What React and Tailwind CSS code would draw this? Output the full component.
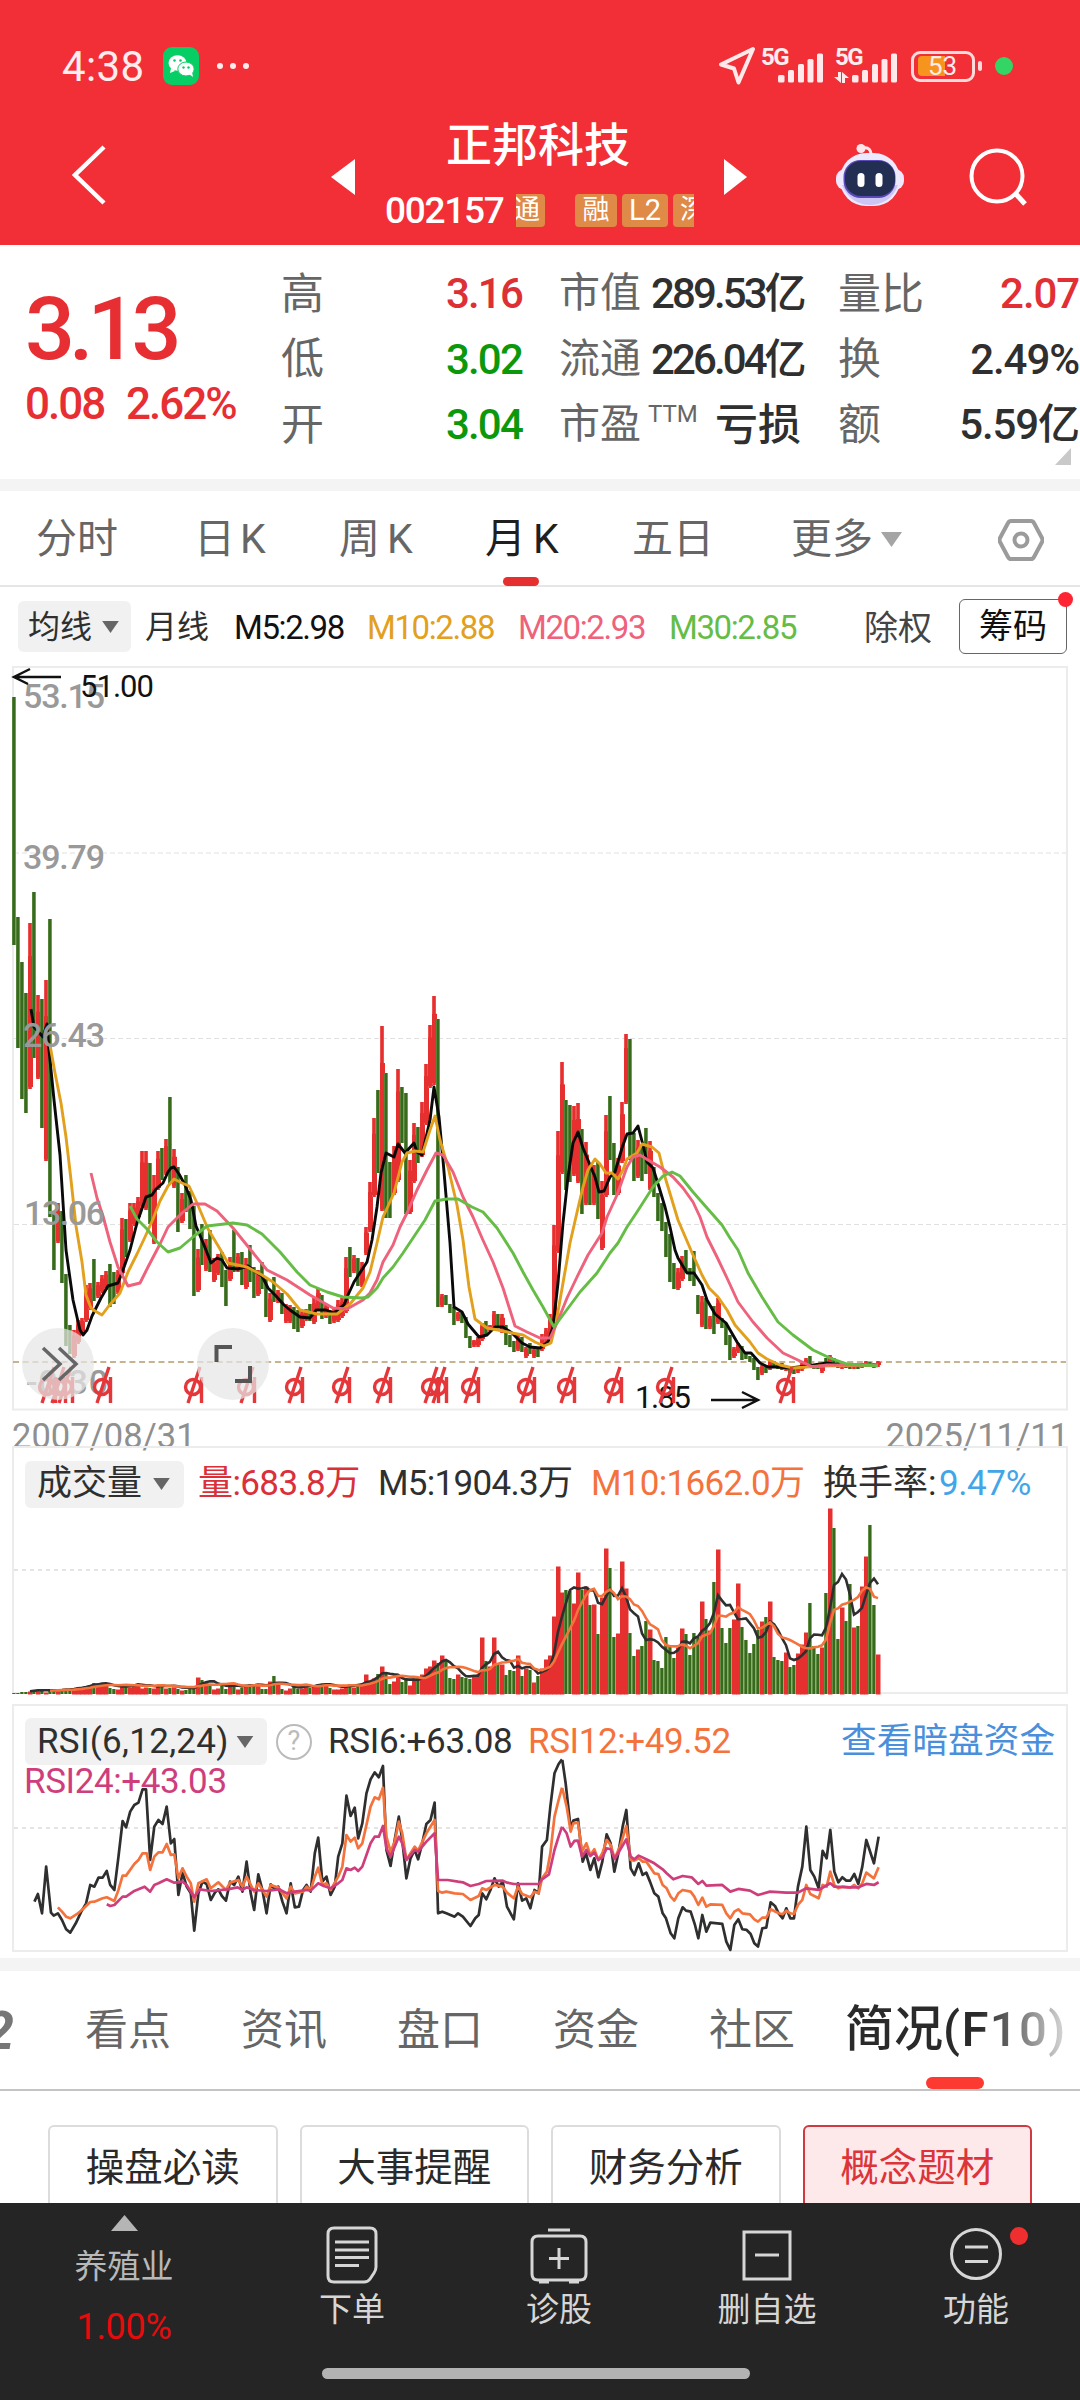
// [trend, high, low] per month, r = up, g = down
const CANDLES =
  "g37-285 g257-388 g302-439 g333-453 r263-429 g232-398 r335-419 g339-468 r320-501 g259-557 g551-610 r543-583 g551-623 g614-686 g665-694 r670-698 r660-684 r658-673 r625-662 r623-650 " +
  "g599-641 r622-638 r615-633 r611-630 g604-647 g612-644 r610-634 r558-615 g559-597 r543-582 r543-566 r537-559 r491-548 r491-550 g503-564 r515-584 r491-530 g488-520 r479-515 g437-524 " +
  "r489-528 g507-572 r533-563 g515-552 g531-569 g546-636 r589-632 g564-605 r579-611 g570-612 r598-622 r594-615 g592-627 g610-646 r597-621 g570-612 r593-612 g592-625 r598-629 g585-622 " +
  "g607-638 r610-636 g602-629 g619-657 r633-662 g617-642 r630-643 g633-654 r644-663 r645-663 g647-669 g650-672 r650-668 r649-661 g644-661 r638-664 r629-650 g635-659 r644-658 g650-664 " +
  "r648-663 r640-662 r638-658 r597-653 g587-617 r595-613 g598-626 r602-627 r567-595 r522-572 r458-537 g430-513 r366-551 g413-558 g502-558 r486-535 r409-522 g427-483 g433-554 r500-554 " +
  "r463-523 g467-503 r442-497 r404-465 r365-428 r336-425 g359-647 r634-647 g635-645 g644-653 g647-665 r652-661 g653-663 g657-678 g676-688 r680-687 r677-687 r663-681 g661-674 r665-671 " +
  "r651-668 g654-668 r654-673 g665-685 g675-687 g681-692 r675-691 g677-692 r687-698 g683-694 r688-698 g687-697 r674-691 r668-682 r654-677 r565-667 r471-593 r402-514 g440-530 g445-522 " +
  "r446-516 r443-523 g469-554 r482-545 g507-545 r505-545 g502-559 r521-590 r455-537 g436-500 g483-535 r498-535 r442-503 r374-444 g379-500 g473-521 r480-518 g487-521 g468-514 r481-530 " +
  "g507-537 g533-561 g543-571 g562-597 g574-622 g603-629 r608-630 r596-621 g590-613 g608-621 g591-626 g635-654 r636-667 g638-669 r656-669 g646-674 r638-664 g658-668 g663-685 g675-700 " +
  "r687-698 r683-693 g686-700 g692-699 g696-702 g698-710 g707-720 r705-715 g705-713 r700-710 g701-708 g704-709 g703-710 r706-711 g707-713 g707-714 r707-713 r703-711 r698-708 g696-707 " +
  "g704-709 g703-709 r704-713 g698-707 r695-706 g698-707 g701-708 r704-709 g703-708 g704-709 r704-709 g704-709 r703-708 r701-707 g702-707 g703-708 r701-707";

const candles = CANDLES.split(" ").map((c) => {
  const [hi, lo] = c.slice(1).split("-").map(Number);
  return { up: c[0] === "r", hi, lo };
});

const MA5 =
  "31,349 34,367 43,377 47,364 49,390 54,440 60,495 66,590 73,640 80,670 83,675 87,670 92,656 101,638 108,626 118,623 123,610 130,590 137,563 146,537 152,535 156,529 163,523 168,512 171,508 174,507 179,514 185,525 191,540 196,566 204,585 211,603 217,598 222,600 227,608 238,609 248,606 256,612 262,616 268,628 276,636 284,645 290,650 300,657 310,658 316,650 326,650 334,653 344,645 348,635 354,622 367,602 372,580 377,547 381,513 386,493 394,497 398,484 405,493 414,483 417,492 422,495 430,460 434,427 439,457 443,500 450,583 454,647 462,652 468,664 479,677 487,675 495,667 503,667 512,673 522,683 530,687 540,688 548,682 553,667 558,623 563,563 568,517 573,483 578,472 583,488 590,505 595,517 599,532 604,531 610,517 615,512 622,488 627,474 633,473 638,466 643,485 647,502 653,508 659,527 665,547 670,567 675,590 678,598 687,613 694,613 702,625 707,640 715,654 726,663 737,682 745,693 751,693 760,703 768,707 778,707 790,708 807,706 827,703 840,705 878,705";
const MA10 =
  "50,385 55,413 61,443 66,477 71,520 76,566 82,602 86,635 91,648 95,651 102,655 108,647 120,633 128,612 137,594 145,577 153,559 160,541 168,526 174,519 182,523 189,526 197,543 208,569 220,589 228,603 247,607 262,615 273,622 287,634 300,650 317,654 337,654 350,644 363,628 370,612 377,583 383,557 394,533 402,502 407,493 415,491 423,492 430,470 435,456 440,480 448,507 457,545 463,580 469,627 475,659 487,668 498,670 512,673 523,675 535,682 544,686 551,683 556,663 563,623 570,583 578,548 583,527 588,510 595,499 600,504 606,513 612,513 618,519 623,510 627,499 637,493 642,484 652,487 659,493 665,517 678,560 693,595 702,615 709,628 718,637 727,650 735,665 750,682 758,693 767,699 780,705 793,708 820,706 878,705";
const MA20 =
  "91,513 97,538 103,556 110,582 118,607 128,626 140,623 148,607 160,584 168,567 182,553 193,544 205,544 217,551 233,568 250,589 267,610 287,620 310,635 333,648 347,649 363,640 370,633 377,620 383,602 393,585 400,567 407,553 417,530 427,510 436,493 443,495 453,512 463,537 473,557 482,578 493,602 503,628 515,666 527,672 540,678 550,678 557,663 567,638 577,617 588,595 602,573 607,557 617,535 627,507 633,497 640,495 648,500 660,507 673,517 683,528 693,542 700,557 707,577 717,597 727,618 738,642 753,662 767,678 783,693 800,701 813,707 827,705 878,705";
const MA30 =
  "130,546 137,559 147,569 157,582 168,592 180,588 193,577 207,566 233,563 247,565 262,574 280,592 297,612 310,625 327,632 343,637 362,638 368,637 377,628 383,618 393,607 403,593 415,575 425,560 435,541 447,539 458,539 472,547 483,552 497,568 513,593 523,612 533,630 543,647 554,667 563,655 580,632 597,613 610,593 618,583 627,567 637,552 653,527 663,516 672,512 680,516 693,532 707,548 722,565 730,578 738,590 748,613 762,637 778,662 793,675 813,690 830,698 847,704 878,706";

const VOLUMES = [
  1, 1, 2, 2, 3, 3, 3, 3, 2, 3, 3, 3, 4, 4, 4, 5, 7, 6, 8, 9, 11, 9, 10, 9, 6,
  5, 5, 8, 9, 7, 9, 10, 6, 7, 6, 6, 8, 9, 6, 6, 7, 5, 4, 4, 5, 6, 17, 14, 12,
  10, 5, 6, 10, 5, 9, 8, 5, 6, 8, 10, 9, 9, 5, 5, 13, 18, 10, 5, 4, 6, 8, 5, 6,
  9, 6, 8, 10, 9, 10, 6, 5, 5, 6, 9, 10, 7, 8, 9, 20, 14, 16, 20, 28, 22, 10,
  13, 18, 12, 15, 9, 14, 16, 20, 26, 28, 34, 31, 39, 33, 16, 15, 20, 17, 16, 15,
  18, 20, 57, 33, 28, 57, 31, 30, 19, 24, 23, 39, 18, 26, 24, 12, 18, 26, 35,
  39, 78, 128, 102, 104, 103, 91, 122, 104, 108, 89, 90, 60, 97, 146, 126, 57,
  61, 133, 106, 61, 38, 45, 48, 73, 65, 34, 33, 26, 57, 49, 36, 47, 66, 60, 39,
  61, 57, 93, 75, 64, 112, 145, 66, 51, 66, 75, 111, 67, 54, 41, 50, 64, 73, 77,
  93, 37, 34, 33, 42, 27, 29, 41, 50, 62, 91, 48, 40, 47, 101, 186, 166, 55, 87,
  73, 110, 67, 68, 108, 138, 169, 89, 40,
];

const average = (n) =>
  VOLUMES.map((_, i) => {
    if (i < n - 1) return null;
    const sum = VOLUMES.slice(i - n + 1, i + 1).reduce((a, b) => a + b, 0);
    return `${14 + i * 4},${247 - sum / n}`;
  })
    .filter(Boolean)
    .join(" ");

const RSI = [
  {
    color: "#2f2f2f",
    early:
      "50,635 55,612 61,670 67,530 74,668 78,677 84,670 90,690 96,718 102,728 110,700 118,665 125,640 131,585 137,590 143,563 149,563 155,543 160,585 166,600 172,500 178,393 183,412 189,365 195,345 201,338 207,298 212,298 218,510 224,410 230,390 236,402 242,350 248,460 253,447 259,615 265,548 271,590 277,610 282,722 288,610 294,575 300,582 306,630 312,608 317,598 322,618 328,632 334,575 340,585 346,560 352,605 358,515 364,610 369,660 375,553 381,600 387,670 393,583 399,598 404,590 410,635 416,670 422,580 428,652 434,650 440,600 445,585 451,605 457,490 462,443 468,575 474,560 480,615 486,590 491,500 497,460 503,317 509,378 515,353 520,445 526,400 532,310 538,268 544,247 550,262 556,228 561,480 567,528 573,450 579,380 584,450 590,565 596,505 602,480 607,508 613,460 619,402 625,390 631,338 636,670 642,665 648,670 660,680 665,670 672,680 683,708 690,685 695,675 700,610 706,628 712,600 718,565 724,590 730,575 736,650 746,688 752,580 758,632 764,625 770,655 776,600 782,610 787,470 794,450 799,350 805,250 811,222 816,208",
    late: "127,780 137,850 152,985 160,962 174,957 188,1085 198,1060 211,1110 223,1075 235,1132 247,1085 260,1003 272,1030 283,1115 295,1060 308,980 319,930 332,1105 343,1125 356,1090 368,1125 379,1118 390,1145 403,1180 415,1190 428,1240 438,1255 452,1300 463,1315 475,1255 488,1222 498,1232 512,1235 525,1275 535,1315 547,1245 559,1295 571,1268 607,1272 619,1325 631,1350 643,1275 655,1258 667,1288 680,1290 692,1302 703,1330 714,1340 727,1285 739,1283 752,1207 765,1218 776,1240 788,1255 799,1225 811,1255 822,1255 834,1160 847,1100 859,980 871,1110 883,1130 896,1165 908,1053 920,1075 931,990 943,1115 955,1147 967,1132 979,1142 991,1142 1003,1122 1015,1152 1027,1100 1039,1020 1062,1090 1076,1010",
  },
  {
    color: "#f4733d",
    early:
      "84,652 90,665 96,680 102,685 112,672 120,658 131,636 137,635 149,625 155,622 166,633 172,600 178,557 183,557 195,522 201,510 207,490 213,490 218,540 224,500 230,487 236,487 242,462 248,495 253,493 259,565 265,535 271,560 277,580 282,635 288,580 300,568 306,595 317,577 328,600 334,578 346,570 352,590 358,560 369,605 375,580 387,620 393,585 404,593 416,625 422,590 428,610 440,605 445,590 451,600 457,560 462,533 468,585 474,580 480,600 491,560 497,530 503,435 509,455 515,443 520,475 526,460 538,350 544,322 550,328 556,293 561,440 567,485 573,455 579,395 584,430 590,510 596,490 602,470 607,482 619,430 631,390 636,603 642,608 648,605 660,610 672,612 683,630 695,618 700,595 706,600 718,585 730,590 736,608 746,625 752,590 758,612 770,622 776,605 782,610 787,565 794,545 799,490 805,380 811,330 816,293",
    late: "127,865 140,920 152,995 160,970 174,968 186,1055 199,1030 211,1065 223,1048 235,1080 247,1060 260,1020 272,1035 284,1075 300,1040 319,978 332,1080 343,1082 356,1075 368,1085 379,1085 403,1120 415,1122 428,1155 440,1165 452,1190 463,1202 475,1180 488,1170 512,1175 523,1190 535,1215 547,1193 559,1220 571,1213 607,1215 619,1240 631,1255 643,1235 655,1228 667,1240 690,1243 703,1258 714,1265 727,1253 739,1253 752,1228 776,1240 788,1243 799,1232 811,1240 822,1242 834,1215 847,1200 859,1155 871,1182 896,1195 908,1155 920,1160 931,1115 943,1155 955,1165 967,1160 991,1163 1003,1155 1015,1165 1027,1150 1039,1118 1062,1135 1076,1102",
  },
  {
    color: "#cf3e7c",
    early:
      "155,643 160,648 166,645 178,620 183,620 195,603 201,598 210,590 218,605 224,585 230,580 242,568 253,578 265,575 271,585 282,622 290,598 306,603 330,598 345,592 352,600 358,592 369,600 387,603 405,598 416,610 428,605 445,600 451,602 462,580 470,588 480,595 491,580 497,570 503,535 509,540 515,533 520,543 526,530 532,495 538,460 544,440 550,440 556,408 561,475 567,500 579,440 584,460 590,510 602,480 607,485 619,455 631,430 636,570 650,570 665,575 672,577 683,588 695,582 706,573 730,572 736,578 746,582 782,582 787,568 797,553 805,480 811,440 816,410",
    late: "127,982 140,1000 152,1040 163,1023 174,1022 186,1070 199,1050 211,1068 223,1058 235,1080 247,1072 260,1045 272,1048 284,1077 300,1050 319,1018 332,1070 343,1078 356,1067 379,1078 403,1090 428,1108 440,1120 460,1138 488,1128 515,1132 535,1152 547,1143 559,1157 607,1155 631,1175 655,1167 690,1172 714,1185 750,1175 799,1178 834,1178 859,1165 896,1170 931,1150 943,1160 991,1162 1015,1162 1039,1152 1062,1155 1076,1147",
  },
];

const DIVIDENDS = [47, 57, 64, 102, 193, 246, 294, 341, 382, 430, 438, 470, 526, 566, 613, 665, 785];

const Caret = ({ className }) => (
  <svg viewBox="0 0 18 13" className={className}>
    <path d="M0 0h18L9 13z" fill="currentColor" />
  </svg>
);

const Signal = () => (
  <svg className="shrink-0" width="46" height="30" viewBox="0 0 46 30" fill="#ffe9ea">
    <rect x="0" y="22" width="6.5" height="7.5" rx="1.5" />
    <rect x="10" y="17" width="6" height="12.5" rx="1.5" />
    <rect x="20" y="11" width="6" height="18.5" rx="1.5" />
    <rect x="29.5" y="6" width="6" height="23.5" rx="1.5" />
    <rect x="39" y="0.5" width="6" height="29" rx="1.5" />
  </svg>
);

const StatusBar = () => (
  <div className="flex h-[102px] items-end">
    <div className="flex h-[72px] w-full items-center text-[#ffeced]">
      <span className="ml-[62px] w-[101px] text-[42px] tracking-[0.4px]">4:38</span>
      <svg width="36" height="38" viewBox="0 0 36 38">
        <rect width="36" height="38" rx="9" fill="#06ce64" />
        <ellipse cx="14.500" cy="16" rx="9" ry="7.800" fill="#fff" />
        <path d="M8 21l-1 5 5-2z" fill="#fff" />
        <circle cx="11.500" cy="13.500" r="1.300" fill="#06ce64" />
        <circle cx="17.500" cy="13.500" r="1.300" fill="#06ce64" />
        <ellipse cx="23" cy="22" rx="8.200" ry="7" fill="#fff" stroke="#06ce64" />
        <path d="M26 27l4 3-1-5z" fill="#fff" />
        <circle cx="20.500" cy="20.500" r="1.200" fill="#06ce64" />
        <circle cx="25.500" cy="20.500" r="1.200" fill="#06ce64" />
      </svg>
      <div className="ml-[18px] flex gap-[7px]">
        <i className="size-[6px] rounded-full bg-[#ffeced]" />
        <i className="size-[6px] rounded-full bg-[#ffeced]" />
        <i className="size-[6px] rounded-full bg-[#ffeced]" />
      </div>
      <svg className="ml-[468px] shrink-0" width="40" height="40" viewBox="0 0 40 40" fill="none">
        <path
          d="M36 3L4 18.500l13 4 4.500 14z"
          stroke="#ffe9ea"
          strokeWidth="4"
          strokeLinejoin="round"
        />
      </svg>
      <div className="flex h-[38px] w-[66px] shrink-0 items-end pb-[2px]">
        <span className="mb-[14px] ml-[4px] w-[17px] shrink-0 text-[24px] leading-none font-bold tracking-[-1.5px]">
          5G
        </span>
        <Signal />
      </div>
      <div className="ml-[11px] flex h-[38px] w-[64px] shrink-0 items-end pb-[2px]">
        <span className="mb-[14px] ml-[1px] w-[17px] shrink-0 text-[24px] leading-none font-bold tracking-[-1.5px]">
          5G
        </span>
        <svg className="mr-[3px] -ml-[18px] shrink-0" width="15" height="11" viewBox="0 0 15 11">
          <path d="M0 5h4V0h3v11zM8 0v11h3V6h4z" fill="#ffe9ea" />
        </svg>
        <Signal />
      </div>
      <div className="ml-[13px] flex h-[31px] w-[64px] shrink-0 items-center rounded-[9px] border-3 border-[#ffdadb] px-[4px]">
        <div className="h-[20px] w-[27px] shrink-0 rounded-l-[4px] bg-[#f7941e]" />
        <span className="-ml-[17px] text-[26px] leading-none">53</span>
      </div>
      <i className="ml-[3px] h-[10px] w-[4px] rounded bg-[#ffdadb]" />
      <i className="ml-[13px] size-[18px] shrink-0 rounded-full bg-[#33d565]" />
    </div>
  </div>
);

const Robot = () => (
  <svg width="68" height="64" viewBox="0 0 68 64">
    <circle cx="25" cy="5.500" r="4.500" fill="#ffe6ea" />
    <path d="M26 5c6-1 9 1 9 7" stroke="#ffe6ea" strokeWidth="3" fill="none" />
    <rect x="0" y="26" width="68" height="21" rx="9" fill="#f1e6fb" />
    <rect x="4" y="10" width="60" height="53" rx="26" fill="#eeeafe" />
    <path d="M6 42c6 14 16 20 28 20s23-6 28-20z" fill="#cdc6f4" />
    <rect x="7.500" y="17" width="52" height="38" rx="17" fill="#5a49b8" />
    <rect x="9" y="18" width="50" height="35" rx="16" fill="#222e52" />
    <rect x="21.500" y="30" width="7" height="14" rx="3.500" fill="#fff" />
    <rect x="39.500" y="30" width="7" height="14" rx="3.500" fill="#fff" />
  </svg>
);

const Header = () => (
  <header className="h-[245px] bg-[#f22f37] text-white">
    <StatusBar />
    <div className="flex h-[143px] items-start">
      <svg className="mt-[43px] ml-[71px]" width="36" height="60" viewBox="0 0 36 60">
        <path d="M33 2L4 30l29 28" fill="none" stroke="#fff" strokeWidth="4.500" />
      </svg>
      <svg className="mt-[57px] ml-[224px]" width="24" height="36" viewBox="0 0 24 36">
        <path d="M24 0v36L0 18z" fill="#fff" />
      </svg>
      <div className="ml-[30px] flex w-[310px] flex-col">
        <h1 className="mt-[16px] ml-[61px] h-[54px] text-[46px] leading-[54px] font-medium whitespace-nowrap">
          正邦科技
        </h1>
        <div className="mt-[22px] flex h-[33px] items-center text-[30px] leading-[33px]">
          <span className="w-[131px] text-[37px] font-medium tracking-[-1.3px]">002157</span>
          <span className="flex h-[33px] w-[29px] justify-end overflow-hidden rounded-r bg-[#e08a48] pr-[5px] text-[27px]">
            通
          </span>
          <span className="ml-[30px] h-[33px] w-[42px] rounded bg-[#e08a48] text-center text-[27px]">
            融
          </span>
          <span className="ml-[5px] h-[33px] w-[46px] rounded bg-[#e08a48] text-center text-[29px]">
            L2
          </span>
          <span className="ml-[5px] h-[33px] w-[21px] overflow-hidden rounded-l bg-[#e08a48] pl-[7px] text-[27px] whitespace-nowrap">
            深
          </span>
        </div>
      </div>
      <svg className="mt-[57px] ml-[29px]" width="24" height="36" viewBox="0 0 24 36">
        <path d="M0 0v36l23-18z" fill="#fff" />
      </svg>
      <div className="mt-[41px] ml-[88px]">
        <Robot />
      </div>
      <svg className="mt-[46px] ml-[65px]" width="60" height="60" viewBox="0 0 60 60" fill="none">
        <circle cx="28" cy="28" r="25.500" stroke="#fff" strokeWidth="4" />
        <path d="M46 45l10 11" stroke="#fff" strokeWidth="5" />
      </svg>
    </div>
  </header>
);

const quotes = [
  ["高", "3.16", "text-[#dd3035]", "市值", "289.53亿", "量比", "2.07", "text-[#e22f33]"],
  ["低", "3.02", "text-[#0b980b]", "流通", "226.04亿", "换", "2.49%", "text-[#2f2f2f]"],
  ["开", "3.04", "text-[#0b980b]", "市盈", "亏损", "额", "5.59亿", "text-[#2f2f2f]"],
];

const Quote = () => (
  <section className="relative flex h-[234px]">
    <div className="ml-[25px] w-[256px] text-[#e62e33]">
      <div className="mt-[44px] h-[80px] text-[88px] leading-[80px] font-medium tracking-[-6px]">
        3.13
      </div>
      <div className="mt-[12px] flex h-[46px] items-center text-[44px] font-medium tracking-[-2px]">
        <span className="w-[101px]">0.08</span>
        <span>2.62%</span>
      </div>
    </div>
    <div className="mt-[16px]">
      {quotes.map(([a, b, bc, c, d, e, f, fc]) => (
        <div key={a} className="flex h-[65.5px] items-center text-[43px] whitespace-nowrap">
          <span className="w-[80px] text-[#666]">{a}</span>
          <span className={`w-[162px] pr-[1px] text-right text-[42px] font-medium tracking-[-1.8px] ${bc}`}>
            {b}
          </span>
          <span className="ml-[36px] flex w-[92px] text-[41px] text-[#666]">
            {c}
            {c === "市盈" && <sup className="top-[2px] ml-[7px] text-[24px] leading-[36px]">TTM</sup>}
          </span>
          <span
            className={
              d === "亏损"
                ? "w-[150px] text-right font-medium text-[#2f2f2f]"
                : "w-[150px] text-right text-[42px] font-medium tracking-[-2.9px] text-[#2f2f2f]"
            }
          >
            {d}
          </span>
          <span className="ml-[37px] w-[90px] text-[#666]">{e}</span>
          <span className={`w-[151px] text-right text-[42px] font-medium tracking-[-1.1px] ${fc}`}>{f}</span>
        </div>
      ))}
    </div>
    <svg className="absolute right-[9px] bottom-[14px]" width="16" height="17" viewBox="0 0 16 17">
      <path d="M16 0v17H0z" fill="#c9c9c9" />
    </svg>
  </section>
);

const PeriodTabs = () => (
  <nav className="flex h-[96px] items-center border-b-2 border-[#e6e6e6] pt-[3px] text-[41px] whitespace-nowrap text-[#666]">
    <span className="ml-[36px] w-[158px]">分时</span>
    <span className="w-[145px]">
      日<span className="ml-[5px]">K</span>
    </span>
    <span className="w-[146px]">
      周<span className="ml-[7px]">K</span>
    </span>
    <span className="relative w-[147px] text-[#1f1f1f]">
      月<span className="ml-[7px]">K</span>
      <i className="absolute -bottom-[16px] left-[18px] h-[9px] w-[36px] rounded-full bg-[#e62f2f]" />
    </span>
    <span className="w-[159px]">五日</span>
    <span className="w-[90px]">更多</span>
    <Caret className="h-[17px] w-[21px] text-[#a5a5a5]" />
    <svg className="ml-[96px]" width="46" height="44" viewBox="0 0 46 44" fill="none">
      <path
        d="M13 3h20q2 0 3 2l8 15q1 2 0 4l-8 15q-1 2-3 2H13q-2 0-3-2L2 24q-1-2 0-4l8-15q1-2 3-2z"
        stroke="#9b9b9b"
        strokeWidth="4"
      />
      <circle cx="23" cy="22" r="6.500" stroke="#9b9b9b" strokeWidth="4" />
    </svg>
  </nav>
);

const Averages = () => (
  <div className="flex h-[73px] items-center pt-[6px] text-[32px] whitespace-nowrap">
    <span className="ml-[18px] flex h-[51px] w-[113px] items-center rounded-md bg-[#f1f1f1] pl-[10px] text-[#2f2f2f]">
      均线
      <Caret className="ml-[10px] h-[12px] w-[17px] text-[#666]" />
    </span>
    <span className="mt-[3px] ml-[14px] flex text-[#2f2f2f]">
      <span className="w-[89px]">月线</span>
      <span className="w-[133px] text-[33px] tracking-[-1.4px] text-[#111]">M5:2.98</span>
      <span className="w-[151px] text-[33px] tracking-[-1.4px] text-[#e2a01c]">M10:2.88</span>
      <span className="w-[151px] text-[33px] tracking-[-1.4px] text-[#ee627c]">M20:2.93</span>
      <span className="w-[195px] text-[33px] tracking-[-1.4px] text-[#65bd45]">M30:2.85</span>
    </span>
    <span className="mt-[3px] text-[34px] text-[#444]">除权</span>
    <span className="relative ml-[27px] flex h-[55px] w-[108px] items-center justify-center rounded-md border-[1.5px] border-[#666] text-[34px] text-[#111]">
      筹码
      <i className="absolute -top-[8px] -right-[7px] size-[15px] rounded-full bg-[#ff2433]" />
    </span>
  </div>
);

const PriceChart = () => (
  <section className="h-[751px]">
    <svg width="1080" height="751" viewBox="0 0 1080 751" fill="none">
      <rect x="13" y="7" width="1054" height="742.500" stroke="#ececec" strokeWidth="2" />
      <path d="M14 193H1066M14 378.500H1066M14 564.500H1066" stroke="#e0e0e0" strokeDasharray="5 3" />
      <path d="M13 702H1066" stroke="#b59b6a" strokeWidth="1.500" strokeDasharray="6 3.700" />
      {candles.map(({ up, hi, lo }, i) => {
        const x = 14 + i * 4;
        const body = hi + (lo - hi) * 0.2;
        return up ? (
          <g key={i}>
            <rect x={x - 2} y={hi} width="4" height={lo - hi} fill="#ee5353" />
            <rect x={x - 1} y={hi} width="2" height={lo - hi} fill="#e62f2f" />
            <rect x={x - 2} y={body} width="5" height={Math.max(lo - body - 2, 2)} fill="#e62f2f" />
          </g>
        ) : (
          <g key={i}>
            <rect x={x - 2} y={hi} width="4" height={lo - hi} fill="#6f9f55" />
            <rect x={x - 1.5} y={hi} width="2.500" height={lo - hi} fill="#38691d" />
          </g>
        );
      })}
      <g strokeWidth="2.900" strokeLinejoin="round">
        <polyline points={MA5} stroke="#0a0a0a" />
        <polyline points={MA10} stroke="#e2a01c" />
        <polyline points={MA20} stroke="#ee627c" />
        <polyline points={MA30} stroke="#65bd45" />
      </g>
      <g fill="#999" fontSize="34" fontWeight="500">
        <text x="23" y="48" textLength="82">53.15</text>
        <text x="23" y="209" textLength="82">39.79</text>
        <text x="23" y="387" textLength="82">26.43</text>
        <text x="24" y="565" textLength="81">13.06</text>
        <text x="26" y="734" textLength="82">-0.30</text>
      </g>
      <g fill="#111" fontSize="31">
        <text x="80" y="37" textLength="74">51.00</text>
        <text x="635" y="748" textLength="56">1.85</text>
      </g>
      {DIVIDENDS.map((x) => (
        <g key={x} stroke="#e5363a" strokeWidth="3.400">
          <circle cx={x} cy="727" r="7.500" />
          <path d={`M${x + 8.5} 717v26M${x + 7} 707l-12 36`} />
        </g>
      ))}
      <g stroke="#111" strokeWidth="2.500">
        <path d="M14 17H61M30 9L14 17l14 7" />
        <path d="M711 740h46M742 732l16 8-16 8" />
      </g>
      <circle cx="58" cy="704" r="36" fill="#e6e6e6" fillOpacity=".72" />
      <path d="M43 688l17 16-17 16M59 688l17 16-17 16" stroke="#666" strokeWidth="3.500" />
      <circle cx="233" cy="704" r="36" fill="#e6e6e6" fillOpacity=".72" />
      <path d="M232 687h-15.500v15M235 721h15v-15" stroke="#555" strokeWidth="4" />
    </svg>
  </section>
);

const Dates = () => (
  <div className="flex h-[35px] items-center justify-between pt-[14px] pr-[11px] pl-[12px] text-[34.5px] leading-[20px] text-[#8f8f8f]">
    <span>2007/08/31</span>
    <span>2025/11/11</span>
  </div>
);

const Volume = () => (
  <section className="relative h-[249px]">
    <svg className="absolute inset-0" width="1080" height="249" viewBox="0 0 1080 249" fill="none">
      <rect x="13" y="1" width="1054" height="246" stroke="#ececec" strokeWidth="2" />
      <path d="M14 124H1066" stroke="#e4e4e4" strokeWidth="2" strokeDasharray="4 4" />
      {VOLUMES.map((v, i) =>
        candles[i].up ? (
          <rect key={i} x={12 + i * 4} y={248.5 - v} width="4.500" height={v} fill="#e62f2f" />
        ) : (
          <g key={i}>
            <rect x={12 + i * 4} y={248 - v} width="4" height={v} fill="#86b26d" />
            <rect x={12.5 + i * 4} y={248 - v} width="2.500" height={v} fill="#38691d" />
          </g>
        )
      )}
      <polyline points={average(5)} stroke="#2f2f2f" strokeWidth="2.600" />
      <polyline points={average(10)} stroke="#f4733d" strokeWidth="2.600" />
    </svg>
    <div className="relative flex items-center pt-[12px] pl-[25px] text-[35px] whitespace-nowrap">
      <span className="flex h-[47px] w-[159px] items-center rounded-md bg-[#f1f1f1] pl-[12px] text-[#2f2f2f]">
        成交量
        <Caret className="ml-[11px] h-[12px] w-[17px] text-[#666]" />
      </span>
      <span className="ml-[14px] w-[180px] tracking-[-0.6px] text-[#d9303a]">量:683.8万</span>
      <span className="w-[213px] tracking-[-0.7px] text-[#2f2f2f]">M5:1904.3万</span>
      <span className="w-[232px] tracking-[-0.7px] text-[#f4733d]">M10:1662.0万</span>
      <span className="w-[116px] text-[#2f2f2f]">换手率:</span>
      <span className="tracking-[-0.4px] text-[#42a5e8]">9.47%</span>
    </div>
  </section>
);

const RsiPanel = () => (
  <section className="relative mt-[9px] h-[248px]">
    <svg className="absolute inset-0" width="1080" height="248" viewBox="0 1704 1080 248" fill="none">
      <rect x="13" y="1705" width="1054" height="246" stroke="#ececec" strokeWidth="2" />
      <path d="M14 1828H1066" stroke="#e4e4e4" strokeWidth="2" strokeDasharray="4 4" />
      {RSI.map(({ color, early, late }) => (
        <g key={color} stroke={color} strokeWidth="2.700" strokeLinejoin="round">
          <polyline
            points={early}
            transform="translate(0 1690) scale(.6888 .3333)"
            vectorEffect="non-scaling-stroke"
          />
          <polyline
            points={late}
            transform="translate(520 1500) scale(.3333)"
            vectorEffect="non-scaling-stroke"
          />
        </g>
      ))}
    </svg>
    <div className="relative flex items-center pt-[11px] pl-[25px] text-[35px] whitespace-nowrap">
      <span className="flex h-[47px] w-[242px] items-center rounded-md bg-[#f1f1f1] pl-[12px] tracking-[0.3px] text-[#2f2f2f]">
        <span className="w-[199px]">RSI(6,12,24)</span>
        <Caret className="h-[12px] w-[18px] text-[#666]" />
      </span>
      <span className="ml-[9px] flex size-[36px] items-center justify-center rounded-full border-[2.5px] border-[#bbb] text-[27px] leading-none text-[#bbb]">
        ?
      </span>
      <span className="ml-[16px] w-[200px] tracking-[-0.3px] text-[#2f2f2f]">RSI6:+63.08</span>
      <span className="w-[313px] tracking-[-0.4px] text-[#f4733d]">RSI12:+49.52</span>
      <span className="text-[35.7px] text-[#4a8fdc]">查看暗盘资金</span>
    </div>
    <div className="relative -mt-[3px] ml-[24px] h-[32px] text-[35px] leading-[32px] tracking-[-0.4px] text-[#cf3e7c]">
      RSI24:+43.03
    </div>
  </section>
);

const InfoTabs = () => (
  <nav className="relative flex h-[120px] items-center overflow-hidden border-b-2 border-[#c4c4c4] text-[43px] whitespace-nowrap text-[#666]">
    <span className="-ml-[16px] w-[101px] text-[54px] font-bold text-[#777] italic">2</span>
    <span className="w-[156px]">看点</span>
    <span className="w-[156px]">资讯</span>
    <span className="w-[156px]">盘口</span>
    <span className="w-[156px]">资金</span>
    <span className="w-[136px]">社区</span>
    <span className="bg-gradient-to-r from-[#2a2a2a] from-60% to-[#ddd] bg-clip-text text-[49px] font-medium text-transparent">
      简况<span className="tracking-[1.4px]">(F10)</span>
    </span>
    <i className="absolute bottom-0 left-[926px] h-[12px] w-[58px] rounded-full bg-[#fc3a32]" />
  </nav>
);

const Topics = () => (
  <div className="flex h-[112px] gap-[22px] overflow-hidden pt-[34px] pl-[48px] text-[38.5px] text-[#2a2a2a]">
    {["操盘必读", "大事提醒", "财务分析"].map((t) => (
      <div
        key={t}
        className="flex h-[86px] w-[229.5px] shrink-0 items-center justify-center rounded-md border-2 border-[#dcdcdc]"
      >
        {t}
      </div>
    ))}
    <div className="flex h-[86px] w-[229.5px] shrink-0 items-center justify-center rounded-md border-2 border-[#cf3a40] bg-[#fde9e9] text-[#dc3439]">
      概念题材
    </div>
  </div>
);

const NavItem = ({ label, className, children }) => (
  <div className={`flex flex-col items-center ${className}`}>
    <svg width="64" height="60" viewBox="0 0 64 60" fill="none" stroke="#d6d6d6" strokeWidth="3">
      {children}
    </svg>
    <span className="mt-[5px] h-[40px] leading-[40px] whitespace-nowrap">{label}</span>
  </div>
);

const BottomNav = () => (
  <footer className="h-[197px] bg-[#252525] text-[33px] text-[#d6d6d6]">
    <div className="flex h-[165px]">
      <div className="ml-[24px] flex w-[200px] flex-col items-center text-[#b8b8b8]">
        <svg className="mt-[12px]" width="27" height="16" viewBox="0 0 27 16">
          <path d="M13.500 0L27 16H0z" fill="#b5b5b5" />
        </svg>
        <span className="mt-[15px] h-[42px] leading-[42px]">养殖业</span>
        <span className="mt-[17px] h-[44px] text-[36px] leading-[44px] tracking-[-0.3px] text-[#e60c0c]">
          1.00%
        </span>
      </div>
      <NavItem label="下单" className="ml-[52px] w-[152px] pt-[22px]">
        <path d="M14 3h36q6 0 6 6v33q0 3-2 6l-4 6q-2 3-6 3H14q-6 0-6-6V9q0-6 6-6z" />
        <path d="M15 17h34M15 25h34M15 32.500h34M15 40.500h24" />
      </NavItem>
      <NavItem label="诊股" className="ml-[55px] w-[152px] pt-[22px]">
        <path d="M11 11h42q6 0 6 6v32q0 6-6 6H11q-6 0-6-6V17q0-6 6-6zM21 5h22M12 57h10M42 57h10M32 23v21M22 33.500h20" />
      </NavItem>
      <NavItem label="删自选" className="ml-[56px] w-[152px] pt-[22px]">
        <path d="M9 7h46v47H9zM20 30h24" />
      </NavItem>
      <div className="relative ml-[57px]">
        <NavItem label="功能" className="w-[152px] pt-[22px]">
          <circle cx="32" cy="29" r="24.500" />
          <path d="M21 22h23M21 36.500h23" />
        </NavItem>
        <i className="absolute top-[24px] left-[110px] size-[18px] rounded-full bg-[#ef2f2f]" />
      </div>
    </div>
    <div className="ml-[322px] h-[11px] w-[428px] rounded-full bg-[#b3b3b3]" />
  </footer>
);

export default function App() {
  return (
    <div className="flex h-[2400px] w-[1080px] flex-col overflow-hidden bg-white font-['Roboto','Noto_Sans_CJK_SC',sans-serif] *:shrink-0">
      <Header />
      <Quote />
      <div className="h-[12px] bg-[#f4f4f4]" />
      <PeriodTabs />
      <Averages />
      <PriceChart />
      <Dates />
      <Volume />
      <RsiPanel />
      <div className="mt-[6px] h-[13px] bg-[#f4f4f4]" />
      <InfoTabs />
      <Topics />
      <BottomNav />
    </div>
  );
}
